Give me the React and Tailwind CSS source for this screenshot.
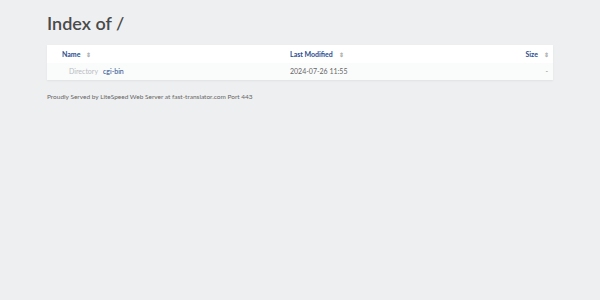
export default function App() {
    return <div className="min-h-[300px] bg-[#eeeff0] px-[47px] pt-[12px] font-['Lato','Liberation_Sans',sans-serif] text-[#555]">
        <h1 className="text-[18px] font-semibold leading-[22px] text-[#4a4a4a]">Index of /</h1>
        <div className="mt-[11px] bg-white shadow-[0_1px_2px_rgba(0,0,0,0.06)]">
            <div className="flex h-[18px] items-center text-[7px] font-bold text-[#2a4d8f]">
                <div className="flex w-[243px] items-center pl-[15px]">Name <span className="ml-[6px] text-[6px] text-[#aaa]">⇕</span></div>
                <div className="flex flex-1 items-center">Last Modified <span className="ml-[6px] text-[6px] text-[#aaa]">⇕</span></div>
                <div className="flex items-center pr-[4px]">Size <span className="ml-[6px] text-[6px] text-[#aaa]">⇕</span></div>
            </div>
            <div className="flex h-[17px] items-center bg-[#fafbfb] text-[7px]">
                <div className="flex w-[243px] items-center pl-[22px]">
                    <span className="text-[#b8bcc2]">Directory</span>
                    <span className="ml-[5px] text-[#2a4d8f]">cgi-bin</span>
                </div>
                <div className="flex-1 text-[#666]">2024-07-26 11:55</div>
                <div className="pr-[5px] text-[#888]">-</div>
            </div>
        </div>
        <p className="mt-[12px] text-[6.5px] text-[#666]">Proudly Served by LiteSpeed Web Server at fast-translator.com Port 443</p>
    </div>
}
